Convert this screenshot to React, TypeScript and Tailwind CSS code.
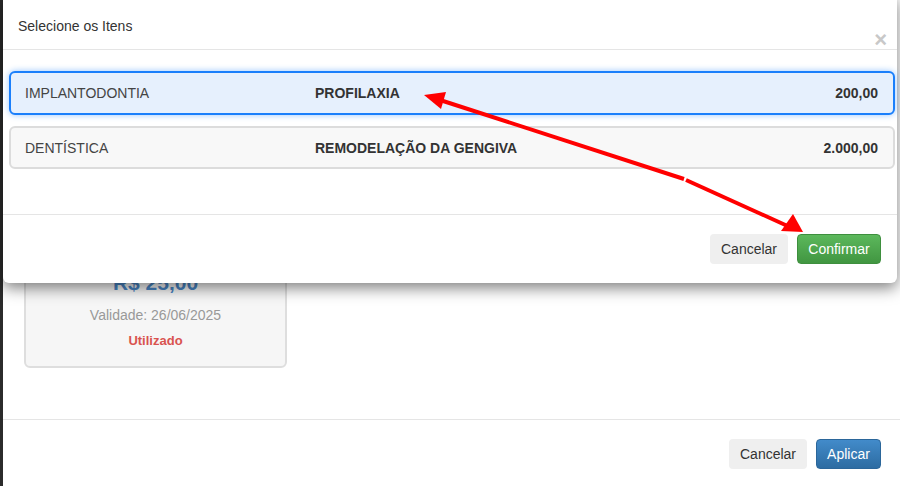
import React from "react";

const items = [
  { area: "IMPLANTODONTIA", proc: "PROFILAXIA", valor: "200,00", selected: true },
  { area: "DENTÍSTICA", proc: "REMODELAÇÃO DA GENGIVA", valor: "2.000,00", selected: false },
];

function Arrows() {
  return (
    <svg className="pointer-events-none absolute inset-0" width="900" height="486" viewBox="0 0 900 486">
      <g stroke="#ff0000" strokeWidth="4" fill="none" strokeLinecap="butt">
        <line x1="684" y1="179" x2="440" y2="100" />
        <line x1="686" y1="180" x2="792" y2="228" />
      </g>
      <polygon points="424,95 446,92 441,109" fill="#ff0000" />
      <polygon points="803,232 781,231 793,214" fill="#ff0000" />
    </svg>
  );
}

export default function App() {
  return (
    <div className="relative w-[900px] h-[486px] overflow-hidden bg-[#2b2b2b] pl-[3px] font-['Liberation_Sans',Arial,sans-serif] text-sm text-[#333]">
      {/* underlying modal */}
      <div className="flex h-full flex-col bg-white">
        <div className="h-[230px]" />
        <div className="px-[21px]">
          <div className="flex w-[263px] flex-col items-center rounded-md border-2 border-[#dedede] bg-[#f6f6f6] pt-[36px] pb-[15px]">
            <div className="h-[30px] text-[21px] font-bold leading-[30px] text-[#4a86c5]">R$ 25,00</div>
            <div className="mt-[7px] h-[20px] leading-[20px] text-[#999]">Validade: 26/06/2025</div>
            <div className="mt-[6px] h-[20px] text-[13px] font-bold leading-[20px] text-[#d9534f]">Utilizado</div>
          </div>
        </div>
        <div className="mt-[51px] flex justify-end gap-[9px] border-t border-[#e5e5e5] pt-[19px] pr-[19px]">
          <button className="h-[30px] w-[78px] rounded bg-[#efefef] text-[#333]">Cancelar</button>
          <button className="h-[30px] w-[65px] rounded border border-[#2b669a] bg-gradient-to-b from-[#428bca] to-[#2d6ca2] text-white">
            Aplicar
          </button>
        </div>
      </div>

      {/* top modal */}
      <div className="absolute left-[3px] top-[-6px] w-[894px] rounded-md bg-white shadow-[0_5px_15px_rgba(0,0,0,0.5)]">
        <div className="relative flex h-[56px] items-end border-b border-[#e5e5e5] pb-[13px] pl-[15px]">
          <span className="leading-[20px]">Selecione os Itens</span>
          <span className="absolute right-[10px] bottom-[0px] text-[22px] font-bold leading-[18px] text-[#c8c8c8]">×</span>
        </div>
        <div className="flex flex-col gap-[11px] pt-[21px] pb-[45px] pl-[6px] pr-[2px]">
          {items.map((it) =>
            it.selected ? (
              <div
                key={it.area}
                className="flex h-[44px] items-center rounded-md border-2 border-[#1a7ffb] bg-[#e6f0fd] pl-[14px] pr-[15px] shadow-[0_0_6px_rgba(26,127,251,0.45)]"
              >
                <span className="w-[290px] text-[#444]">{it.area}</span>
                <span className="flex-1 font-bold">{it.proc}</span>
                <span className="font-bold">{it.valor}</span>
              </div>
            ) : (
              <div
                key={it.area}
                className="flex h-[43px] items-center rounded-md border-2 border-[#dcdcdc] bg-[#f8f8f8] pl-[14px] pr-[15px]"
              >
                <span className="w-[290px] text-[#444]">{it.area}</span>
                <span className="flex-1 font-bold">{it.proc}</span>
                <span className="font-bold">{it.valor}</span>
              </div>
            )
          )}
        </div>
        <div className="flex justify-end gap-[9px] border-t border-[#e5e5e5] pt-[19px] pb-[19px] pr-[16px]">
          <button className="h-[30px] w-[78px] rounded bg-[#efefef] text-[#333]">Cancelar</button>
          <button className="h-[30px] w-[84px] rounded border border-[#3e8f3e] bg-gradient-to-b from-[#5cb85c] to-[#419641] text-white">
            Confirmar
          </button>
        </div>
      </div>

      <Arrows />
    </div>
  );
}
